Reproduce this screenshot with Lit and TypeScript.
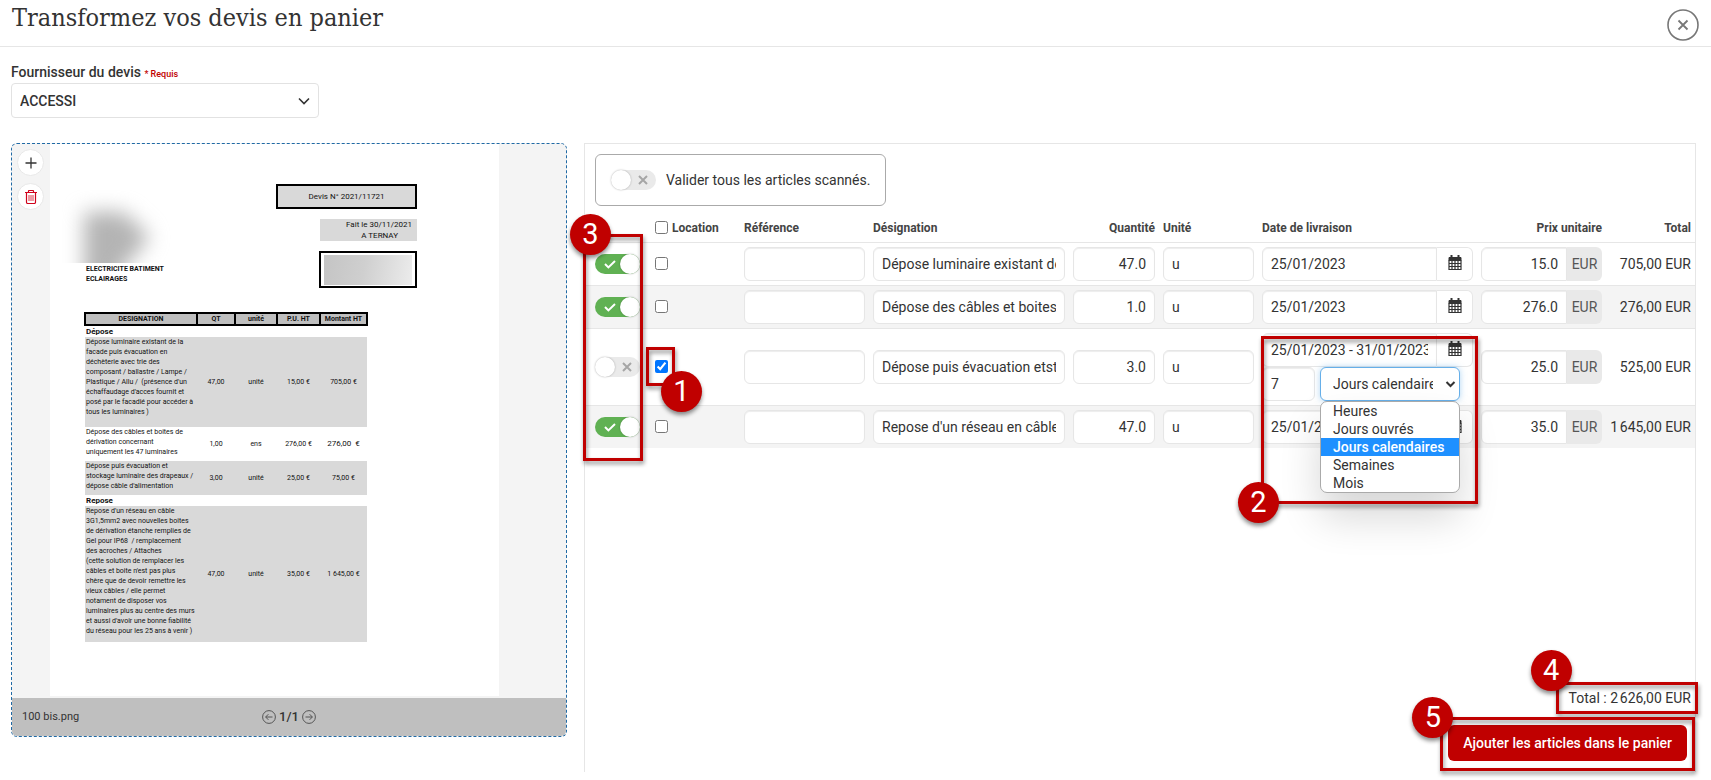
import { LitElement, html, css, svg, nothing } from "lit";
import { customElement, property, state } from "lit/decorators.js";
import { classMap } from "lit/directives/class-map.js";

interface Article {
  valide: boolean;
  location: boolean;
  designation: string;
  quantite: string;
  unite: string;
  date: string;
  prix: string;
  total: string;
}

interface LigneDevis {
  titre?: string;
  lignes?: string[];
  taille?: string;
  gris?: boolean;
  grand?: boolean;
  cellules?: string[];
}

const ARTICLES: Article[] = [
  { valide: true, location: false, designation: "Dépose luminaire existant de la facade", quantite: "47.0", unite: "u", date: "25/01/2023", prix: "15.0", total: "705,00 EUR" },
  { valide: true, location: false, designation: "Dépose des câbles et boites de dérivation", quantite: "1.0", unite: "u", date: "25/01/2023", prix: "276.0", total: "276,00 EUR" },
  { valide: false, location: true, designation: "Dépose puis évacuation etstockage luminaire", quantite: "3.0", unite: "u", date: "25/01/2023 - 31/01/2023", prix: "25.0", total: "525,00 EUR" },
  { valide: true, location: false, designation: "Repose d'un réseau en câble 3G1,5mm2", quantite: "47.0", unite: "u", date: "25/01/2023", prix: "35.0", total: "1\u202f645,00 EUR" },
];

const DUREES = ["Heures", "Jours ouvrés", "Jours calendaires", "Semaines", "Mois"];

const DEVIS: LigneDevis[] = [
  { titre: "Dépose" },
  {
    gris: true,
    taille: "haute",
    lignes: [
      "Dépose luminaire existant de la",
      "facade puis évacuation en",
      "déchèterie avec trie des",
      "composant / ballastre / Lampe /",
      "Plastique / Allu /  (présence d'un",
      "échaffaudage d'acces fournit et",
      "posé par le facadié pour accéder à",
      "tous les luminaires )",
    ],
    cellules: ["47,00", "unité", "15,00 €", "705,00 €"],
  },
  {
    taille: "basse",
    grand: true,
    lignes: ["Dépose des câbles et boites de", "dérivation concernant", "uniquement les 47 luminaires"],
    cellules: ["1,00", "ens", "276,00 €", "276,00  €"],
  },
  {
    gris: true,
    taille: "basse",
    lignes: ["Dépose puis évacuation et", "stockage luminaire des drapeaux /", "dépose câble d'alimentation"],
    cellules: ["3,00", "unité", "25,00 €", "75,00 €"],
  },
  { titre: "Repose" },
  {
    gris: true,
    taille: "longue",
    lignes: [
      "Repose d'un réseau en câble",
      "3G1,5mm2 avec nouvelles boites",
      "de dérivation étanche remplies de",
      "Gel pour IP68  / remplacement",
      "des acroches / Attaches",
      "(cette solution de remplacer les",
      "câbles et boite n'est pas plus",
      "chère que de devoir remettre les",
      "vieux câbles / elle permet",
      "notament de disposer vos",
      "luminaires plus au centre des murs",
      "et aussi d'avoir une bonne fiabilité",
      "du réseau pour les 25 ans à venir )",
    ],
    cellules: ["47,00", "unité", "35,00 €", "1 645,00 €"],
  },
];

@customElement("bascule-article")
export class BasculeArticle extends LitElement {
  @property({ type: Boolean }) actif = false;
  @property() nom = "";

  static styles = css`
    :host { display: inline-block; vertical-align: middle; }
    .piste {
      position: relative;
      display: flex;
      align-items: center;
      width: 45px;
      height: 20px;
      border-radius: 10px;
      background: #eaeaea;
      cursor: pointer;
    }
    .piste.on { background: #60b153; }
    .case { position: absolute; inset: 0; margin: 0; opacity: 0; }
    .bouton {
      width: 20px;
      height: 20px;
      border-radius: 50%;
      background: #fff;
      box-shadow: 0 0 2px rgba(0, 0, 0, 0.3);
    }
    .signe { display: block; width: 12px; height: 12px; margin-left: 6px; }
    .on .signe { margin: 0 4px 0 9px; }
    .on .bouton { order: 2; }
  `;

  render() {
    return html`
      <label class=${classMap({ piste: true, on: this.actif })}>
        <input class="case" type="checkbox" aria-label=${this.nom} .checked=${this.actif}
          @change=${(e: Event) => { this.actif = (e.target as HTMLInputElement).checked; }}>
        <span class="bouton"></span>
        <svg class="signe" viewBox="0 0 12 12" fill="none" stroke-width="2">
          ${this.actif
            ? svg`<path d="M1 6l3.4 3.4L11 3" stroke="#fff"/>`
            : svg`<path d="M2 2l8 8M10 2l-8 8" stroke="#a6a6a6"/>`}
        </svg>
      </label>`;
  }
}

@customElement("apercu-devis")
export class ApercuDevis extends LitElement {
  static styles = css`
    :host {
      display: block;
      align-self: start;
      border: 1px dashed #206aa5;
      border-radius: 6px;
      background: #f4f4f4;
      font-family: Roboto, sans-serif;
      color: #333;
      overflow: hidden;
    }
    .zone { display: grid; grid-template-columns: 38px minmax(0, 449px) 1fr; }
    .outils { display: flex; flex-direction: column; gap: 7px; padding: 5px; }
    .outil {
      display: grid;
      place-items: center;
      width: 27px;
      height: 27px;
      padding: 0;
      border: 1px solid #e8e8e8;
      border-radius: 50%;
      background: #fff;
      color: #333;
    }
    .outil svg { display: block; }
    .supprimer { color: #d0021b; }
    .page {
      box-sizing: border-box;
      min-height: 552px;
      margin-bottom: 2px;
      padding: 40px 82px 54px 34px;
      background: #fff;
      color: #111;
      font: 7px/10px Roboto, sans-serif;
    }
    .entete { display: flex; justify-content: space-between; height: 104px; margin-bottom: 24px; }
    .logo { height: 73px; width: 112px; margin: 6px 0 1px -24px; overflow: hidden; }
    .tache {
      width: 66px;
      height: 100px;
      margin: 22px 0 0 24px;
      background: #b4b4b4;
      clip-path: polygon(0 0, 60% 0, 100% 25%, 55% 60%, 45% 100%, 0 100%);
    }
    .flou { display: flow-root; filter: blur(10px); }
    .societe { margin: 0; padding-left: 2px; font-weight: 700; white-space: nowrap; }
    .cartouches { display: flex; flex-direction: column; align-items: flex-end; }
    .numero {
      box-sizing: border-box;
      width: 141px;
      padding: 6px 0;
      border: 2px solid #000;
      background: #d9d9d9;
      text-align: center;
      font-size: 8px;
      line-height: 9px;
      height: 25px;
    }
    .fait {
      box-sizing: border-box;
      width: 97px;
      height: 22px;
      margin: 10px 0;
      padding-right: 5px;
      background: #d9d9d9;
      font-size: 8px;
      line-height: 11px;
      text-align: right;
    }
    .lieu { padding-right: 14px; }
    .adresse { box-sizing: border-box; width: 98px; height: 37px; padding: 2px 3px 1px; border: 2px solid #000; }
    .masque { height: 30px; background: linear-gradient(100deg, #c4c4c4, #cfcfcf 45%, #ececec); }
    .devis { width: 284px; table-layout: fixed; border-collapse: collapse; }
    .c1 { width: 112px; } .c2 { width: 38px; } .c3 { width: 42px; } .c4 { width: 43px; }
    .devis th { padding: 0; height: 10px; border: 2px solid #000; background: #bfbfbf; font-weight: 700; line-height: 9px; }
    .devis td { padding: 0; text-align: center; white-space: pre; }
    .devis .texte { padding-left: 1px; text-align: left; vertical-align: top; }
    .devis .titre { padding-left: 1px; height: 11px; text-align: left; font-weight: 700; font-size: 8px; }
    .gris { background: #d9d9d9; }
    .haute { height: 90px; } .basse { height: 34px; } .longue { height: 136px; }
    .devis .grand { font-size: 8px; }
    .pied {
      display: grid;
      grid-template-columns: 1fr auto 1fr;
      align-items: center;
      height: 38px;
      padding: 0 10px;
      background: #bfbfbf;
      font-size: 11px;
    }
    .pages { display: flex; align-items: center; gap: 3px; font-size: 13px; font-weight: 500; }
    .fleche { display: block; padding: 0; border: 0; background: none; color: #555; }
    .fleche svg { display: block; }
  `;

  render() {
    return html`
      <div class="zone">
        <div class="outils">
          <button class="outil" aria-label="Ajouter un devis">
            <svg width="12" height="12" viewBox="0 0 12 12" stroke="currentColor" stroke-width="1.3"><path d="M6 .5v11M.5 6h11"/></svg>
          </button>
          <button class="outil supprimer" aria-label="Supprimer le devis">
            <svg width="12" height="14" viewBox="0 0 12 14" fill="none" stroke="currentColor">
              <path d="M0 2.5h12M3.5 2.5V1.2q0-.7.7-.7h3.6q.7 0 .7.7v1.3M1.5 2.5v9.8q0 1.2 1.2 1.2h6.6q1.2 0 1.2-1.2V2.5" stroke-width="1.2"/>
              <path d="M4 5v6M6 5v6M8 5v6" stroke-width=".8"/>
            </svg>
          </button>
        </div>
        <div class="page">
          <div class="entete">
            <div>
              <div class="logo"><div class="flou"><div class="tache"></div></div></div>
              <p class="societe">ELECTRICITE BATIMENT<br>ECLAIRAGES</p>
            </div>
            <div class="cartouches">
              <div class="numero">Devis N° 2021/11721</div>
              <div class="fait"><div>Fait le 30/11/2021</div><div class="lieu">A TERNAY</div></div>
              <div class="adresse"><div class="masque"></div></div>
            </div>
          </div>
          <table class="devis">
            <colgroup><col class="c1"><col class="c2"><col class="c3"><col class="c4"><col></colgroup>
            <thead><tr><th>DESIGNATION</th><th>QT</th><th>unité</th><th>P.U. HT</th><th>Montant HT</th></tr></thead>
            <tbody>
              ${DEVIS.map((l) => l.titre
                ? html`<tr><td class="titre" colspan="5">${l.titre}</td></tr>`
                : html`<tr class="${l.taille} ${l.gris ? "gris" : ""}">
                    <td class="texte">${l.lignes!.join("\n")}</td>
                    ${l.cellules!.map((c, i) => html`<td class=${l.grand && i === 3 ? "grand" : ""}>${c}</td>`)}
                  </tr>`)}
            </tbody>
          </table>
        </div>
      </div>
      <div class="pied">
        <span>100 bis.png</span>
        <div class="pages">
          <button class="fleche" aria-label="Page précédente">
            <svg width="14" height="14" viewBox="0 0 14 14" fill="none" stroke="currentColor"><circle cx="7" cy="7" r="6.4"/><path d="M10.5 7H3.8M6.4 4.2L3.6 7l2.8 2.8"/></svg>
          </button>
          <span>1/1</span>
          <button class="fleche" aria-label="Page suivante">
            <svg width="14" height="14" viewBox="0 0 14 14" fill="none" stroke="currentColor"><circle cx="7" cy="7" r="6.4"/><path d="M3.5 7h6.7M7.6 4.2L10.4 7 7.6 9.8"/></svg>
          </button>
        </div>
      </div>`;
  }
}

@customElement("app-root")
export class AppRoot extends LitElement {
  @state() private duree = "Jours calendaires";

  static styles = css`
    :host {
      display: flex;
      flex-direction: column;
      box-sizing: border-box;
      min-height: 100vh;
      padding-bottom: 8px;
      background: #fff;
      color: #333;
      font: 14px/20px Roboto, sans-serif;
    }
    * { box-sizing: border-box; }
    .barre {
      display: flex;
      justify-content: space-between;
      align-items: flex-start;
      height: 47px;
      padding: 0 12px;
      border-bottom: 1px solid #e6e6e6;
    }
    .titre { margin: 0; font: 400 25px/36px "Roboto Slab", "DejaVu Serif Condensed", "DejaVu Serif", serif; }
    .fermer { margin: 9px 0 0; padding: 0; border: 0; background: none; color: #777; }
    .fermer svg, .chevron, .cal { display: block; }
    .fournisseur { padding: 15px 11px 25px; }
    .etiquette { display: block; height: 21px; font-weight: 500; }
    .requis { color: #c00000; font-size: 9px; }
    .liste { position: relative; display: block; width: 308px; }
    .choix {
      display: block;
      width: 100%;
      height: 35px;
      padding: 0 8px;
      border: 1px solid #e2e2e2;
      border-radius: 4px;
      background: #fff;
      color: #333;
      font: 500 14px Roboto, sans-serif;
      appearance: none;
    }
    .chevron { position: absolute; top: 0; right: 9px; height: 100%; pointer-events: none; }
    .corps {
      flex: 1;
      display: grid;
      grid-template-columns: 1fr 2fr;
      gap: 17px;
      padding: 0 15px 0 11px;
    }
    .panneau { display: flex; flex-direction: column; border: 1px solid #e6e6e6; border-bottom: 0; min-width: 0; }
    .tout {
      display: flex;
      align-items: center;
      align-self: flex-start;
      gap: 10px;
      height: 52px;
      margin: 10px 10px 8px;
      padding: 0 15px;
      border: 1px solid #aaa;
      border-radius: 6px;
    }
    .cadre { position: relative; }
    .grille { width: 100%; table-layout: fixed; border-collapse: collapse; }
    .k0 { width: 66px; } .k1 { width: 89px; } .k2 { width: 129px; } .k4 { width: 90px; }
    .k5 { width: 99px; } .k6 { width: 219px; } .k7 { width: 129px; } .k8 { width: 89px; }
    .grille th { height: 28px; padding: 0 4px; text-align: left; font-size: 12px; font-weight: 700; color: #444; white-space: nowrap; }
    .grille .droite { text-align: right; }
    .grille td { padding: 4px; border-top: 1px solid #e6e6e6; vertical-align: middle; white-space: nowrap; }
    .grille .total-ligne { padding-left: 0; text-align: right; }
    .grille .bascule { padding-left: 10px; }
    .grille tbody tr:nth-child(even) { background: #f4f4f4; }
    .entete { display: flex; align-items: center; gap: 4px; }
    .coche { display: block; width: 13px; height: 13px; margin: 0; }
    .repere { position: relative; }
    .champ {
      display: block;
      width: 100%;
      height: 34px;
      padding: 0 8px;
      border: 1px solid #e6e6e6;
      border-radius: 6px;
      background: #fff;
      box-shadow: inset 0 1px 1px rgba(0, 0, 0, 0.075);
      color: #333;
      font: 14px Roboto, sans-serif;
      outline: 0;
    }
    .nombre { text-align: right; }
    .groupe { display: flex; }
    .groupe .champ { flex: 1; min-width: 0; border-radius: 6px 0 0 6px; }
    .agenda {
      display: grid;
      place-items: center;
      width: 36px;
      height: 34px;
      padding: 0 0 2px;
      border: 1px solid #e6e6e6;
      border-left: 0;
      border-radius: 0 6px 6px 0;
      background: #fff;
      color: #333;
    }
    .devise { display: grid; place-items: center; width: 35px; height: 34px; border-radius: 0 6px 6px 0; background: #e9e9e9; color: #555; }
    .duree { display: flex; gap: 5px; }
    .duree .nombre-jours { width: 53px; }
    .deroulant { position: relative; width: 140px; }
    .deroulant .actif {
      padding: 0 26px 0 12px;
      border-color: #66afe9;
      box-shadow: 0 0 6px rgba(102, 175, 233, 0.5);
      appearance: none;
    }
    .deroulant .chevron { right: 4px; }
    .menu {
      position: absolute;
      z-index: 2;
      top: 34px;
      left: 0;
      width: 140px;
      margin: 0;
      padding: 0;
      border: 1px solid #aaa;
      border-radius: 7px;
      background: #fff;
      box-shadow: 0 24px 40px rgba(0, 0, 0, 0.16);
      list-style: none;
      overflow: hidden;
    }
    .option { padding-left: 12px; line-height: 18px; }
    .option.choisie { background: #1e90ff; color: #fff; font-weight: 500; }
    .bas { display: flex; flex-direction: column; align-items: flex-end; gap: 17px; margin-top: auto; padding: 0 4px 11px; }
    .total { position: relative; margin: 0; }
    .action { position: relative; margin-right: 4px; }
    .ajouter {
      display: block;
      height: 36px;
      padding: 0 15px;
      border: 0;
      border-radius: 6px;
      background: #c00000;
      color: #fff;
      font: 500 14px Roboto, sans-serif;
    }
    .encadre { position: absolute; z-index: 3; border: 3px solid #c00000; pointer-events: none; filter: drop-shadow(1px 3px 2px rgba(0, 0, 0, 0.45)); }
    .pastille {
      position: absolute;
      z-index: 4;
      display: grid;
      place-items: center;
      width: 41px;
      height: 41px;
      border-radius: 50%;
      background: #c00000;
      box-shadow: 0 3px 4px rgba(0, 0, 0, 0.45);
      color: #fff;
      font: 29px/41px Roboto, sans-serif;
      pointer-events: none;
    }
    .e1 { inset: -13px 61px -13px -9px; }
    .p1 { top: 11px; left: 6px; }
    .e2 { inset: 7px -1px -99px 3px; }
    .p2 { top: 153px; left: -20px; }
    .e3 { top: 20px; bottom: -13px; left: -2px; width: 60px; }
    .p3 { top: 0; left: -15px; }
    .e4 { inset: -6px -7px; left: -13px; }
    .p4 { top: -38px; left: -38px; }
    .e5 { inset: -8px -8px -10px; }
    .p5 { top: -28px; left: -36px; }
  `;

  private calendrier() {
    return html`<svg class="cal" width="14" height="16" viewBox="0 0 14 16" fill="none" stroke="currentColor">
      <path d="M1 2.500h12v3H1z" fill="currentColor"/>
      <path d="M3.500 0v3M10.500 0v3" stroke-width="2"/>
      <path d="M1 5v9.500h12V5M1 8.500h12M1 11.500h12M4 5v9.500M7 5v9.500M10 5v9.500" stroke-width="1.200"/>
    </svg>`;
  }

  private ligne(a: Article, i: number) {
    const n = i + 1;
    return html`<tr>
      <td class="bascule"><bascule-article .actif=${a.valide} .nom=${`Valider l'article ${n}`}></bascule-article></td>
      <td><div class="repere">
        <input class="coche" type="checkbox" aria-label="Location de l'article ${n}" .checked=${a.location}>
        ${a.location ? html`<div class="encadre e1"></div><div class="pastille p1">1</div>` : nothing}
      </div></td>
      <td><input class="champ" aria-label="Référence ${n}"></td>
      <td><input class="champ" aria-label="Désignation ${n}" .value=${a.designation}></td>
      <td><input class="champ nombre" aria-label="Quantité ${n}" .value=${a.quantite}></td>
      <td><input class="champ" aria-label="Unité ${n}" .value=${a.unite}></td>
      <td class="repere">
        <div class="groupe">
          <input class="champ" aria-label="Date de livraison ${n}" .value=${a.date}>
          <button class="agenda" aria-label="Ouvrir le calendrier ${n}">${this.calendrier()}</button>
        </div>
        ${a.location ? this.location() : nothing}
      </td>
      <td><div class="groupe">
        <input class="champ nombre" aria-label="Prix unitaire ${n}" .value=${a.prix}>
        <span class="devise">EUR</span>
      </div></td>
      <td class="total-ligne">${a.total}</td>
    </tr>`;
  }

  private location() {
    return html`
      <div class="duree">
        <input class="champ nombre-jours" aria-label="Durée" .value=${"7"}>
        <div class="deroulant">
          <select class="champ actif" aria-label="Unité de durée"
            @change=${(e: Event) => { this.duree = (e.target as HTMLSelectElement).value; }}>
            ${DUREES.map((d) => html`<option ?selected=${d === this.duree}>${d}</option>`)}
          </select>
          <svg class="chevron" width="11" height="34" viewBox="0 0 11 34" fill="none" stroke="#333" stroke-width="2"><path d="M1.500 15l4 4 4-4"/></svg>
          <ul class="menu" role="listbox" aria-label="Unité de durée">
            ${DUREES.map((d) => html`<li role="option" class=${classMap({ option: true, choisie: d === this.duree })}
              aria-selected=${d === this.duree ? "true" : "false"} @click=${() => { this.duree = d; }}>${d}</li>`)}
          </ul>
        </div>
      </div>
      <div class="encadre e2"></div><div class="pastille p2">2</div>`;
  }

  render() {
    return html`
      <header class="barre">
        <h1 class="titre">Transformez vos devis en panier</h1>
        <button class="fermer" aria-label="Fermer">
          <svg width="32" height="32" viewBox="0 0 32 32" fill="none" stroke="currentColor"><circle cx="16" cy="16" r="15" stroke-width="1.600"/><path d="M11.500 11.500l9 9M20.500 11.500l-9 9" stroke-width="1.800"/></svg>
        </button>
      </header>
      <div class="fournisseur">
        <label class="etiquette" for="fournisseur">Fournisseur du devis <span class="requis">* Requis</span></label>
        <div class="liste">
          <select class="choix" id="fournisseur"><option>ACCESSI</option></select>
          <svg class="chevron" width="12" height="35" viewBox="0 0 12 35" fill="none" stroke="#333" stroke-width="1.600"><path d="M1 15.500l5 5 5-5"/></svg>
        </div>
      </div>
      <main class="corps">
        <apercu-devis></apercu-devis>
        <section class="panneau">
          <div class="tout">
            <bascule-article .nom=${"Valider tous les articles scannés."}></bascule-article>
            <span>Valider tous les articles scannés.</span>
          </div>
          <div class="cadre">
            <table class="grille">
              <colgroup><col class="k0"><col class="k1"><col class="k2"><col><col class="k4"><col class="k5"><col class="k6"><col class="k7"><col class="k8"></colgroup>
              <thead><tr>
                <th></th>
                <th><label class="entete"><input class="coche" type="checkbox">Location</label></th>
                <th>Référence</th><th>Désignation</th><th class="droite">Quantité</th><th>Unité</th>
                <th>Date de livraison</th><th class="droite">Prix unitaire</th><th class="droite">Total</th>
              </tr></thead>
              <tbody>${ARTICLES.map((a, i) => this.ligne(a, i))}</tbody>
            </table>
            <div class="encadre e3"></div><div class="pastille p3">3</div>
          </div>
          <div class="bas">
            <p class="total">Total : 2\u202f626,00 EUR<span class="encadre e4"></span><span class="pastille p4">4</span></p>
            <div class="action">
              <button class="ajouter">Ajouter les articles dans le panier</button>
              <div class="encadre e5"></div><div class="pastille p5">5</div>
            </div>
          </div>
        </section>
      </main>`;
  }
}
